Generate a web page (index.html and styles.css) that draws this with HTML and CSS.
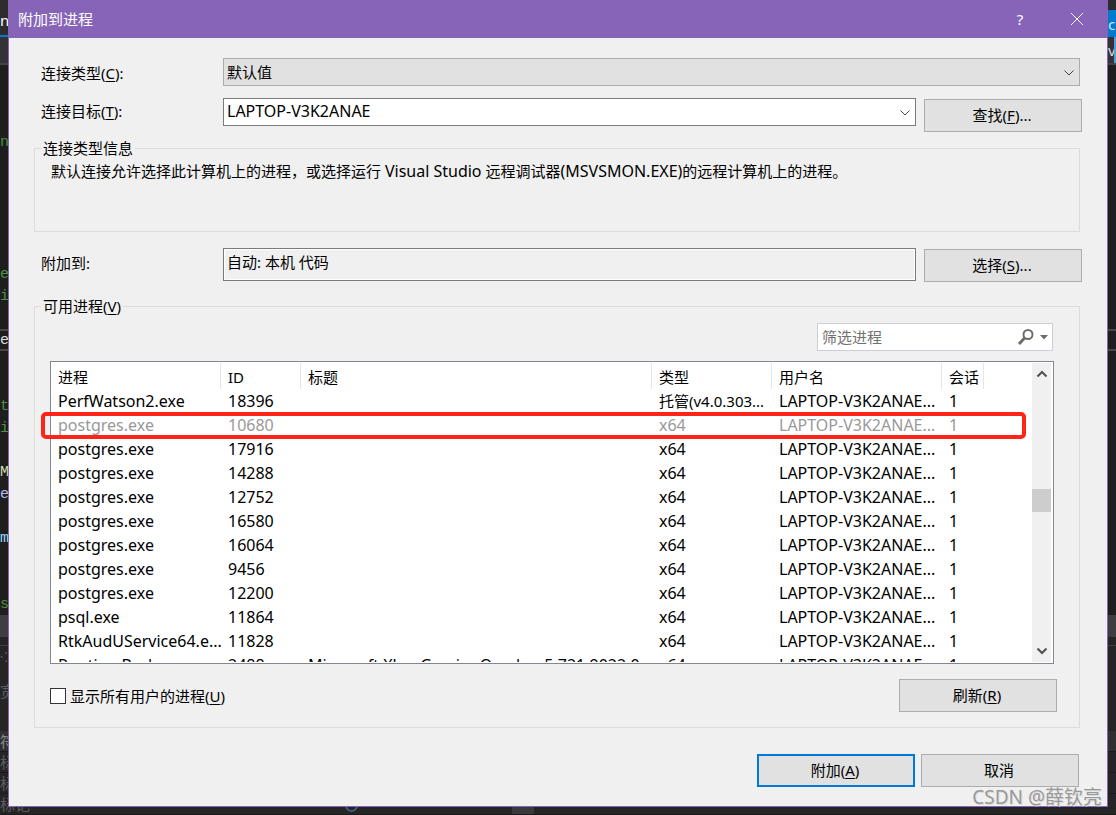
FILE: index.html
```html
<!DOCTYPE html>
<html lang="zh-CN">
<head>
<meta charset="utf-8">
<title>附加到进程</title>
<link rel="stylesheet" href="styles.css">
</head>
<body>
<div class="editor" aria-hidden="true">
  <div class="editor-tabs"><span>n</span><span class="editor-pin">c</span></div>
  <div class="editor-nav"><span></span><span class="editor-member">v</span></div>
  <div class="code">
    <div class="line text-right">-</div>
    <div class="line"></div>
    <div class="line"></div>
    <div class="line comment">nc</div>
    <div class="line"></div>
    <div class="line"></div>
    <div class="line"></div>
    <div class="line"></div>
    <div class="line"></div>
    <div class="line comment">et</div>
    <div class="line comment">in</div>
    <div class="line"></div>
    <div class="line current">ex</div>
    <div class="line"></div>
    <div class="line"></div>
    <div class="line comment">t</div>
    <div class="line comment">in</div>
    <div class="line"></div>
    <div class="line method">Mo</div>
    <div class="line param">el</div>
    <div class="line"></div>
    <div class="line local">me</div>
    <div class="line"></div>
    <div class="line"></div>
    <div class="line comment">si</div>
  </div>
  <div class="editor-scroll"></div>
  <div class="panel-title">⁘</div>
  <div class="panel-bar">宽</div>
  <div class="panel-head">符</div>
  <div class="panel-row">标</div>
  <div class="panel-row">标</div>
  <div class="panel-row panel-last"><span>标记</span><i class="ring"></i><i class="block"></i></div>
</div>

<main class="dialog">
  <header class="titlebar">
    <h1>附加到进程</h1>
    <button type="button" class="title-button" aria-label="帮助">?</button>
    <button type="button" class="title-button" aria-label="关闭">
      <svg width="14" height="14" viewBox="0 0 14 14"><path d="M1 1 13 13M13 1 1 13"/></svg>
    </button>
  </header>

  <form class="content">
    <div class="field-row type-row">
      <label for="type">连接类型(<u>C</u>):</label>
      <div class="combo disabled">
        <select id="type"><option>默认值</option></select>
        <svg class="chevron" width="10" height="6" viewBox="0 0 10 6"><path d="M.5.5 5 5 9.500.5"/></svg>
      </div>
    </div>
    <div class="field-row target-row">
      <label for="target">连接目标(<u>T</u>):</label>
      <div class="combo">
        <input id="target" class="latin" type="text" value="LAPTOP-V3K2ANAE">
        <svg class="chevron" width="10" height="6" viewBox="0 0 10 6"><path d="M.5.5 5 5 9.500.5"/></svg>
      </div>
      <button type="button" class="button">查找(<u>F</u>)...</button>
    </div>

    <fieldset class="group info-group">
      <legend>连接类型信息</legend>
      <p>默认连接允许选择此计算机上的进程，或选择运行 <span class="latin">Visual Studio</span> 远程调试器<span class="latin">(MSVSMON.EXE)</span>的远程计算机上的进程。</p>
    </fieldset>

    <div class="field-row attach-row">
      <label for="attach">附加到:</label>
      <input id="attach" class="readonly" type="text" value="自动: 本机 代码" readonly>
      <button type="button" class="button">选择(<u>S</u>)...</button>
    </div>

    <fieldset class="group process-group">
      <legend>可用进程(<u>V</u>)</legend>
      <div class="filter">
        <input type="search" placeholder="筛选进程" aria-label="筛选进程">
        <button type="button" aria-label="搜索"><svg width="18" height="18" viewBox="0 0 18 18"><circle cx="11" cy="6.500" r="4.500"/><path d="M8 9.500 2 16" class="handle"/></svg></button>
        <button type="button" aria-label="搜索选项"><svg width="8" height="5" viewBox="0 0 8 5"><path d="M0 0h8L4 4.500Z" class="arrow"/></svg></button>
      </div>

      <div class="list">
        <div class="viewport">
          <table>
            <colgroup><col class="c-name"><col class="c-id"><col><col class="c-type"><col class="c-user"><col class="c-session"><col class="c-rest"></colgroup>
            <thead><tr><th><span>进程</span></th><th><span>ID</span></th><th><span>标题</span></th><th><span>类型</span></th><th><span>用户名</span></th><th><span>会话</span></th><td></td></tr></thead>
            <tbody>
              <tr><td>PerfWatson2.exe</td><td>18396</td><td></td><td class="mixed">托管(v4.0.303...</td><td>LAPTOP-V3K2ANAE...</td><td>1</td><td></td></tr>
              <tr class="attached"><td>postgres.exe</td><td>10680</td><td></td><td>x64</td><td>LAPTOP-V3K2ANAE...</td><td>1</td><td></td></tr>
              <tr><td>postgres.exe</td><td>17916</td><td></td><td>x64</td><td>LAPTOP-V3K2ANAE...</td><td>1</td><td></td></tr>
              <tr><td>postgres.exe</td><td>14288</td><td></td><td>x64</td><td>LAPTOP-V3K2ANAE...</td><td>1</td><td></td></tr>
              <tr><td>postgres.exe</td><td>12752</td><td></td><td>x64</td><td>LAPTOP-V3K2ANAE...</td><td>1</td><td></td></tr>
              <tr><td>postgres.exe</td><td>16580</td><td></td><td>x64</td><td>LAPTOP-V3K2ANAE...</td><td>1</td><td></td></tr>
              <tr><td>postgres.exe</td><td>16064</td><td></td><td>x64</td><td>LAPTOP-V3K2ANAE...</td><td>1</td><td></td></tr>
              <tr><td>postgres.exe</td><td>9456</td><td></td><td>x64</td><td>LAPTOP-V3K2ANAE...</td><td>1</td><td></td></tr>
              <tr><td>postgres.exe</td><td>12200</td><td></td><td>x64</td><td>LAPTOP-V3K2ANAE...</td><td>1</td><td></td></tr>
              <tr><td>psql.exe</td><td>11864</td><td></td><td>x64</td><td>LAPTOP-V3K2ANAE...</td><td>1</td><td></td></tr>
              <tr><td>RtkAudUService64.e...</td><td>11828</td><td></td><td>x64</td><td>LAPTOP-V3K2ANAE...</td><td>1</td><td></td></tr>
              <tr><td>RuntimeBroker.exe</td><td>2488</td><td>Microsoft.XboxGamingOverlay_5.721.9022.0_...</td><td>x64</td><td>LAPTOP-V3K2ANAE...</td><td>1</td><td></td></tr>
            </tbody>
          </table>
        </div>
        <div class="scrollbar">
          <svg width="12" height="8" viewBox="0 0 12 8"><path d="M1.500 6.500 6 2l4.500 4.500"/></svg>
          <div class="track"><div class="thumb"></div></div>
          <svg width="12" height="8" viewBox="0 0 12 8"><path d="M1.500 1.500 6 6l4.500-4.500"/></svg>
        </div>
        <div class="highlight"></div>
      </div>

      <div class="list-actions">
        <label class="check"><input type="checkbox"><span>显示所有用户的进程(<u>U</u>)</span></label>
        <button type="button" class="button">刷新(<u>R</u>)</button>
      </div>
    </fieldset>

    <footer class="actions">
      <button type="button" class="button primary">附加(<u>A</u>)</button>
      <button type="button" class="button">取消</button>
    </footer>
  </form>
</main>
<div class="watermark">CSDN @薛钦亮</div>
</body>
</html>
```
FILE: styles.css
```css
* { box-sizing: border-box; }

body {
  margin: 0;
  min-height: 100vh;
  position: relative;
  overflow: hidden;
  padding: 0 8px 8px;
  display: flex;
  background: #252526;
  color: #000;
  font: 15px/20px "Noto Sans", "Noto Sans CJK SC", sans-serif;
}

button, input, select { font: inherit; color: inherit; }
u { text-underline-offset: 2px; text-decoration-thickness: 1px; }
.latin { font-size: 16px; }

/* Editor window behind the dialog */
.editor {
  position: absolute;
  inset: 0;
  overflow: hidden;
  white-space: nowrap;
  background: #252526;
  color: #5c5c5e;
}
.editor-tabs, .editor-nav { display: flex; justify-content: space-between; }
.editor-tabs {
  height: 37px;
  padding-top: 10px;
  background: #2d2d30;
  border-bottom: 2px solid #007acc;
  color: #fff;
}
.editor-pin { width: 8px; line-height: 28px; background: #007acc; color: #d0e6f5; overflow: hidden; }
.editor-nav { height: 28px; background: #333337; border-bottom: 2px solid #434346; color: #dcdcdc; }
.editor-member { width: 8px; line-height: 26px; border-right: 2px solid #569cd6; overflow: hidden; }
.code { background: #1e1e1e; font-family: "Liberation Mono", monospace; color: #dcdcdc; }
.line { height: 22px; line-height: 24px; }
.text-right { padding-left: 6px; color: #569cd6; }
.comment { color: #4c9141; }
.current { border: solid #464646; border-width: 2px 0; line-height: 20px; }
.method { color: #dcdcaa; }
.param { color: #b8b8f0; }
.local { color: #9cdcfe; }
.editor-scroll { height: 22px; background: #3e3e42; }
.panel-title { height: 46px; margin-top: 8px; border-top: 1px solid #3f3f46; }
.panel-bar { height: 40px; line-height: 0; }
.panel-head { height: 21px; background: #303032; border-bottom: 1px solid #1b1b1c; color: #8a8a8a; }
.panel-row { height: 21px; border-bottom: 1px solid #1b1b1c; }
.panel-last { display: flex; align-items: flex-end; }
.panel-last span { width: 345px; }
.ring { width: 13px; height: 13px; margin-bottom: 2px; border: 2px solid #3f5c7a; border-radius: 50%; }
.block { width: 22px; height: 20px; margin-left: 154px; background: #3a3a3c; }

/* Dialog */
.dialog {
  position: relative;
  flex: 1;
  display: flex;
  flex-direction: column;
  background: #f0f0f0;
  border: 1px solid #8764b8;
}
.titlebar { display: flex; align-items: center; height: 37px; padding: 0 7px 2px 9px; background: #8764b8; color: #fff; }
.titlebar h1 { flex: 1; margin: 0; font-size: 15px; font-weight: 400; }
.title-button { width: 46px; height: 30px; margin-left: 11px; padding: 0; border: 0; background: none; }
.title-button svg { display: block; margin: auto; fill: none; stroke: #fff; }

.content { flex: 1; padding: 20px 25px 0; }
.field-row { display: flex; align-items: flex-start; gap: 8px; }
.field-row label { width: 181px; padding: 5px 0 0 7px; }
.type-row { margin: 0 2px 12px 0; }
.target-row label { padding-top: 3px; }
.target-row .button, .attach-row .button { margin-top: 1px; }

.combo { position: relative; flex: 1; height: 28px; background: #fff; border: 1px solid #7a7a7a; }
.combo.disabled { background: #e1e1e1; border-color: #adadad; }
.combo select, .combo input {
  display: block;
  width: 100%;
  height: 26px;
  padding: 0 24px 0 3px;
  border: 0;
  background: none;
  appearance: none;
}
.combo input { padding-bottom: 2px; }
.chevron { position: absolute; right: 5px; top: 11px; fill: none; stroke: #444; pointer-events: none; }
.readonly { flex: 1; min-width: 0; height: 33px; padding: 0 3px 6px; background: #f0f0f0; border: 1px solid #7a7a7a; box-shadow: inset 0 0 0 1px #fff; }

.button { width: 158px; height: 33px; padding: 0 2px 2px 0; background: #e1e1e1; border: 1px solid #adadad; }
.button.primary { border: 2px solid #0078d7; }

.group { min-width: 0; margin: 0 2px 0 0; border: 1px solid #dcdcdc; }
.group legend { padding: 0 2px; }
.info-group { height: 94px; margin-top: 6px; padding: 0 16px; }
.info-group legend { margin-left: -10px; }
.info-group p { margin: 3px 0 0; }
.attach-row { margin-top: 16px; }
.process-group { margin-top: 14px; padding: 7px 23px 15px 15px; }
.process-group legend { margin-left: -9px; }

.filter { display: flex; align-items: center; width: 236px; height: 28px; margin: 0 3px 10px auto; background: #fff; border: 1px solid #cccedb; }
.filter input { flex: 1; min-width: 0; padding: 0 4px; border: 0; background: none; }
.filter input::placeholder { color: #717171; opacity: 1; }
.filter button { padding: 0; width: 16px; border: 0; background: none; display: flex; justify-content: center; }
.filter button:first-of-type { width: 20px; }
.filter svg { fill: none; stroke: #6d6d6d; stroke-width: 2; }
.filter .handle { stroke-width: 3; }
.filter .arrow { fill: #6d6d6d; stroke: none; }

.list { position: relative; display: flex; height: 303px; margin-right: 2px; padding: 0 2px 1px 0; background: #fff; border: 1px solid #828790; }
.viewport { flex: 1; min-width: 0; overflow: hidden; }
table { width: 100%; table-layout: fixed; border-collapse: collapse; }
.c-name { width: 170px; }
.c-id { width: 80px; }
.c-type { width: 120px; }
.c-user { width: 170px; }
.c-session { width: 42px; }
.c-rest { width: 48px; }
th, td { padding: 0; height: 24px; font-weight: 400; text-align: left; white-space: nowrap; overflow: hidden; }
td { padding-left: 7px; font-size: 16px; }
.mixed { font-size: 15px; }
th { height: 27px; }
th span { display: block; height: 26px; padding-left: 7px; line-height: 28px; border-right: 1px solid #e5e5e5; }
.attached { color: #999; }

.scrollbar { display: flex; flex-direction: column; align-items: center; width: 19px; margin-top: 1px; padding: 7px 0; background: #f0f0f0; }
.scrollbar svg { fill: none; stroke: #505050; stroke-width: 2; }
.track { flex: 1; width: 100%; padding-top: 111px; }
.thumb { height: 23px; background: #cdcdcd; }
.highlight { position: absolute; left: -10px; right: 27px; top: 50px; height: 27px; border: 4px solid #ff2418; border-radius: 5px; }

.list-actions { display: flex; justify-content: space-between; align-items: center; margin: 15px -1px 0 0; }
.check { display: flex; align-items: center; gap: 4px; }
.check input { width: 16px; height: 16px; margin: 0; appearance: none; background: #fff; border: 1px solid #333; }

.actions { display: flex; justify-content: flex-end; gap: 6px; margin: 26px 3px 0 0; }

.watermark { position: absolute; right: 14px; bottom: 4px; font-size: 19px; line-height: 28px; color: #999; text-shadow: 1px 1px 0 #ddd; }
```
